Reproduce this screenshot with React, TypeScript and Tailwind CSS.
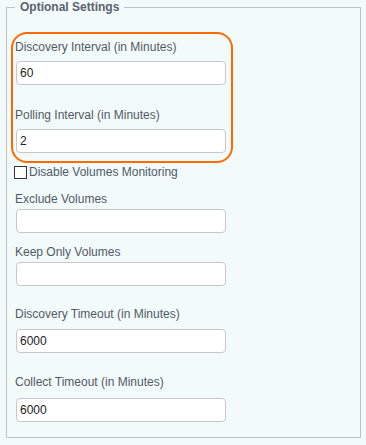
import React from "react";

const font = { fontFamily: '"Liberation Sans", Arial, sans-serif' };

function Field({
  label,
  value,
  labelClass,
  inputClass,
}: {
  label: string;
  value?: string;
  labelClass: string;
  inputClass: string;
}) {
  return (
    <div>
      <div className={`text-[12px] leading-[14px] text-[#505a66] ${labelClass}`}>{label}</div>
      <input
        readOnly
        value={value ?? ""}
        className={`ml-px block h-[24px] w-[210px] rounded-[4px] border border-[#c8c8c8] bg-white pl-[3px] text-[12px] text-[#222] outline-none ${inputClass}`}
      />
    </div>
  );
}

export default function App() {
  return (
    <div className="min-h-[445px] w-[366px] bg-[#f3fafa]" style={font}>
      <fieldset className="ml-[6px] w-[355px] border border-[#bfc3c3] pb-[15px]">
        <legend className="ml-[8px] px-[5px] text-[12px] leading-[14px] font-bold text-[#5a6270]">
          Optional Settings
        </legend>

        <div className="pl-[4px]">
          <div className="mt-[18px] w-[222px] rounded-[16px] border-2 border-[#ff6a00] pb-[8px] pl-[2px] pt-[6px]">
            <Field label="Discovery Interval (in Minutes)" value="60" labelClass="" inputClass="mt-[7px]" />
            <Field label="Polling Interval (in Minutes)" value="2" labelClass="mt-[23px]" inputClass="mt-[7px]" />
          </div>

          <div className="mt-[2px] flex h-[14px] items-center pl-[3px]">
            <span className="h-[13px] w-[13px] border border-[#333] bg-white" />
            <span className="ml-[2px] text-[12px] leading-[14px] text-[#505a66]">Disable Volumes Monitoring</span>
          </div>

          <div className="pl-[4px]">
            <Field label="Exclude Volumes" labelClass="mt-[13px]" inputClass="mt-[3px]" />
            <Field label="Keep Only Volumes" labelClass="mt-[12px]" inputClass="mt-[3px]" />
            <Field label="Discovery Timeout (in Minutes)" value="6000" labelClass="mt-[21px]" inputClass="mt-[8px]" />
            <Field label="Collect Timeout (in Minutes)" value="6000" labelClass="mt-[22px]" inputClass="mt-[9px]" />
          </div>
        </div>
      </fieldset>
    </div>
  );
}
